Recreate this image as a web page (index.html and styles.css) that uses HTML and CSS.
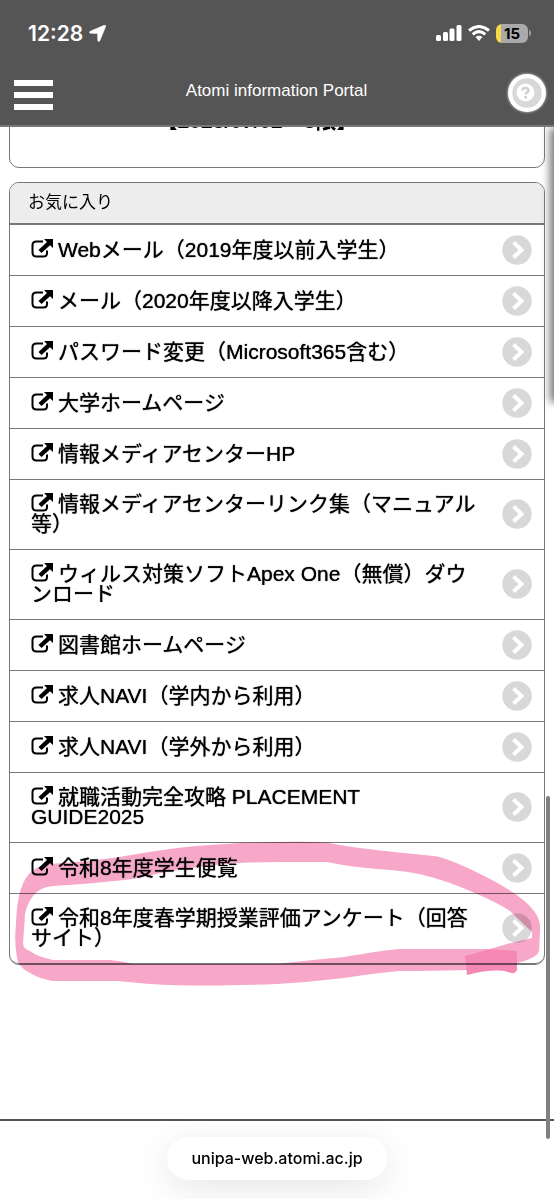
FILE: index.html
```
<!doctype html>
<html lang="ja">
    <head>
        <meta charset="utf-8">
        <meta name="viewport" content="width=device-width, initial-scale=1">
        <title>Atomi information Portal</title>
        <link rel="stylesheet" href="styles.css">
    </head>
    <body>
        <!-- shared icons -->
        <svg class="defs" aria-hidden="true">
            <symbol id="ext" viewBox="0 0 22 19">
                <path d="M12 2.5H5.5Q1.5 2.5 1.5 6V13.5Q1.5 17.5 5.5 17.5H12.5Q16 17.5 16 14V11.5" fill="none" stroke="#000" stroke-width="2"/>
                <path d="M13 0H22V9L19 6.200L10.500 14L7.500 11L16 3Z"/>
            </symbol>
            <symbol id="go" viewBox="0 0 30 30">
                <circle cx="15" cy="15" r="14.700" fill="#d8d8d8"/>
                <path d="M11.500 7.500L19.500 15L11.500 22.500" fill="none" stroke="#fff" stroke-width="4"/>
            </symbol>
        </svg>

        <header class="top">
            <div class="status">
                <span class="time">12:28</span>
                <svg class="loc" viewBox="0 0 17 17"><path d="M15.200 .3Q17.200 -.2 16.600 1.600L10.800 15.800Q9.600 17.600 8.800 15.500L8.600 8.900Q8.600 8.400 8 8.400L1.400 8.200Q-.6 7.500 1.200 6.300Z" fill="#fff" stroke="#fff" stroke-width=".6"/></svg>
                <svg class="signal" viewBox="0 0 26 16" fill="#fff">
                    <rect x="0" y="10" width="5" height="6" rx="1.500"/>
                    <rect x="7" y="7" width="5" height="9" rx="1.500"/>
                    <rect x="13.500" y="3.500" width="5" height="12.500" rx="1.500"/>
                    <rect x="20.500" y="0" width="5" height="16" rx="1.500"/>
                </svg>
                <svg class="wifi" viewBox="0 0 22 16" fill="none" stroke="#fff" stroke-width="3">
                    <path d="M1 5.500Q11-2.500 21 5.500"/>
                    <path d="M4.700 9.300Q11 4 17.300 9.300"/>
                    <path d="M7.500 12L11 16L14.500 12Q11 9.500 7.500 12Z" fill="#fff" stroke="none"/>
                </svg>
                <span class="battery">15</span>
            </div>
            <div class="bar">
                <button class="menu" aria-label="メニュー"><i></i><i></i><i></i></button>
                <h1>Atomi information Portal</h1>
                <button class="help" aria-label="ヘルプ">
                    <svg viewBox="0 0 30 30">
                        <circle cx="15" cy="15" r="14.700" fill="#d8d8d8"/>
                        <circle cx="13.500" cy="14.500" r="9" fill="#fff"/>
                        <path d="M10.500 12.500Q10.500 10 13.500 10T16.500 12.500Q16.500 13.800 14.500 14.600Q13.700 15 13.700 16.500M13.700 18V20.500" fill="none" stroke="#d0d0d0" stroke-width="2.600"/>
                    </svg>
                </button>
            </div>
        </header>

        <main>
            <section class="card news">【2023/07/02　3限】</section>

            <section class="card">
                <h2>お気に入り</h2>
                <ul class="links">
                    <li><a href="#"><span><svg class="ext"><use href="#ext"/></svg>Webメール（2019年度以前入学生）</span><svg class="go"><use href="#go"/></svg></a></li>
                    <li><a href="#"><span><svg class="ext"><use href="#ext"/></svg>メール（2020年度以降入学生）</span><svg class="go"><use href="#go"/></svg></a></li>
                    <li><a href="#"><span><svg class="ext"><use href="#ext"/></svg>パスワード変更（Microsoft365含む）</span><svg class="go"><use href="#go"/></svg></a></li>
                    <li><a href="#"><span><svg class="ext"><use href="#ext"/></svg>大学ホームページ</span><svg class="go"><use href="#go"/></svg></a></li>
                    <li><a href="#"><span><svg class="ext"><use href="#ext"/></svg>情報メディアセンターHP</span><svg class="go"><use href="#go"/></svg></a></li>
                    <li><a href="#"><span><svg class="ext"><use href="#ext"/></svg>情報メディアセンターリンク集（マニュアル等）</span><svg class="go"><use href="#go"/></svg></a></li>
                    <li><a href="#"><span><svg class="ext"><use href="#ext"/></svg>ウィルス対策ソフトApex One（無償）ダウンロード</span><svg class="go"><use href="#go"/></svg></a></li>
                    <li><a href="#"><span><svg class="ext"><use href="#ext"/></svg>図書館ホームページ</span><svg class="go"><use href="#go"/></svg></a></li>
                    <li><a href="#"><span><svg class="ext"><use href="#ext"/></svg>求人NAVI（学内から利用）</span><svg class="go"><use href="#go"/></svg></a></li>
                    <li><a href="#"><span><svg class="ext"><use href="#ext"/></svg>求人NAVI（学外から利用）</span><svg class="go"><use href="#go"/></svg></a></li>
                    <li><a href="#"><span><svg class="ext"><use href="#ext"/></svg>就職活動完全攻略 PLACEMENT<br>GUIDE2025</span><svg class="go"><use href="#go"/></svg></a></li>
                    <li><a href="#"><span><svg class="ext"><use href="#ext"/></svg>令和8年度学生便覧</span><svg class="go"><use href="#go"/></svg></a></li>
                    <li><a href="#"><span><svg class="ext"><use href="#ext"/></svg>令和8年度春学期授業評価アンケート（回答サイト）</span><svg class="go"><use href="#go"/></svg></a></li>
                </ul>
                <!-- pink marker round the last two links -->
                <svg class="marker" viewBox="0 830 554 170">
                    <path fill="#f7a8c9" fill-rule="evenodd" d="M32 870Q38 865 50 863Q100 860 143 852Q200 842 277 841Q310 840 330 842Q350 847 434 855Q450 857 494 880Q525 897 534 910Q541 919 540 930L539 950Q537 957 517 962L467 969Q430 970 400 970Q375 972 344 977Q310 981 277 983Q200 986 150 983L117 980H53Q40 978 30 972Q18 966 17 957Q14 940 16 923Q17 882 32 870Z
                        M33 895Q40 886 53 885Q90 883 133 878Q160 872 183 868Q230 861 277 861H327Q350 866 377 868Q410 870 427 875Q445 879 477 893Q500 903 510 910L532 931V937L507 943L490 948H400Q385 949 344 956Q310 959 277 963H133Q122 960 110 959H53Q38 956 30 950Q23 948 23 942Q24 930 25 913Q27 903 33 895Z"/>
                    <path fill="#f489b3" d="M465 955L490 948L517 950V969Q515 974 508 971Q495 967 467 974Z"/>
                </svg>
            </section>
        </main>

        <footer>
            <button class="url">unipa-web.atomi.ac.jp</button>
        </footer>

        <div class="edge"></div>
        <div class="thumb"></div>
    </body>
</html>
```
FILE: styles.css
```
* {
    box-sizing: border-box;
}
body {
    margin: 0;
    min-height: 100vh;
    display: flex;
    flex-direction: column;
    background: #fff;
    color: #000;
    font-family: "Liberation Sans", "Noto Sans CJK JP", sans-serif;
    overflow: hidden;
}
svg {
    display: block;
}
button {
    border: 0;
    padding: 0;
    font: inherit;
    cursor: pointer;
}
.defs {
    position: absolute;
    width: 0;
    height: 0;
}

/* header */
.top {
    position: relative;
    z-index: 2;
    background: #555;
    border-bottom: 2px solid #777;
    color: #fff;
}
.status {
    display: flex;
    align-items: center;
    height: 66px;
    padding: 0 26px 0 28px;
}
.time {
    font: 600 21px Inter, sans-serif;
}
.loc {
    width: 17px;
    height: 17px;
    margin-left: 6px;
}
.signal {
    width: 26px;
    height: 16px;
    margin-left: auto;
}
.wifi {
    width: 22px;
    height: 16px;
    margin: 0 6px;
}
.battery {
    position: relative;
    width: 32px;
    height: 19px;
    border-radius: 6px;
    background: linear-gradient(to right, #f9d949 5px, #aaa 5px);
    color: #000;
    font: 700 15px/19px Inter, sans-serif;
    text-align: center;
}
.battery::after {
    content: "";
    position: absolute;
    left: 33px;
    top: 6px;
    width: 2px;
    height: 6px;
    border-radius: 0 2px 2px 0;
    background: #999;
}
.bar {
    display: grid;
    grid-template-columns: 39px 1fr 46px;
    align-items: center;
    height: 59px;
    padding: 0 8px 6px 14px;
}
.menu {
    display: grid;
    gap: 6px;
    width: 39px;
    padding-top: 4px;
    background: none;
}
.menu i {
    height: 6px;
    background: #fff;
}
h1 {
    margin: 0;
    padding-bottom: 4px;
    font-size: 17px;
    font-weight: normal;
    text-align: center;
}
.help {
    justify-self: end;
    width: 38px;
    height: 38px;
    padding: 4px;
    border-radius: 50%;
    background: #fff;
    box-shadow: 0 0 3px #ddd;
}

/* cards */
main {
    flex: 1;
    padding: 0 9px;
}
.card {
    position: relative;
    margin-bottom: 14px;
    border: 1px solid #777;
    border-radius: 10px;
}
.news {
    margin-top: -20px;
    padding: 2px 40px 35px 0;
    font-size: 21px;
    line-height: 22px;
    font-weight: bold;
    text-align: center;
}
h2 {
    margin: 0;
    padding: 0 18px;
    border-bottom: 2px solid #777;
    border-radius: 9px 9px 0 0;
    background: #ededed;
    font-size: 17px;
    font-weight: normal;
    line-height: 40px;
}
.links {
    margin: 0;
    padding: 0;
    list-style: none;
}
.links li + li {
    border-top: 1px solid #777;
}
.links li:last-child {
    border-bottom: 1px solid #777;
    border-radius: 0 0 9px 9px;
}
.links a {
    display: flex;
    align-items: center;
    justify-content: space-between;
    gap: 18px;
    min-height: 50px;
    padding: 14px 12px 15px 21px;
    color: #000;
    font-size: 21px;
    line-height: 20px;
    text-decoration: none;
    text-shadow: 0 0 1px #000;
}
.ext {
    display: inline-block;
    width: 22px;
    height: 19px;
    margin: -4px 5px -4px 0;
    vertical-align: 3px;
}
.go {
    flex: none;
    width: 30px;
    height: 30px;
    margin: -6px 0;
}
.marker {
    position: absolute;
    left: -10px;
    bottom: -37px;
    width: 554px;
    height: 170px;
    mix-blend-mode: multiply;
    pointer-events: none;
}

/* bottom address bar */
footer {
    display: flex;
    justify-content: center;
    padding: 16px 0 19px;
    border-top: 2px solid #555;
}
.url {
    padding: 0 24px;
    border-radius: 22px;
    background: #fff;
    box-shadow: 0 8px 36px rgba(0, 0, 0, .1);
    color: #000;
    font: 500 16px/43px Inter, sans-serif;
}

/* side panel shadow and scroll thumb */
.edge {
    position: absolute;
    right: -8px;
    top: 132px;
    width: 8px;
    height: 266px;
    box-shadow: 0 0 8px 4px #777;
}
.thumb {
    position: absolute;
    right: 4px;
    top: 796px;
    width: 4px;
    height: 343px;
    border-radius: 2px;
    background: #808080;
}
```
